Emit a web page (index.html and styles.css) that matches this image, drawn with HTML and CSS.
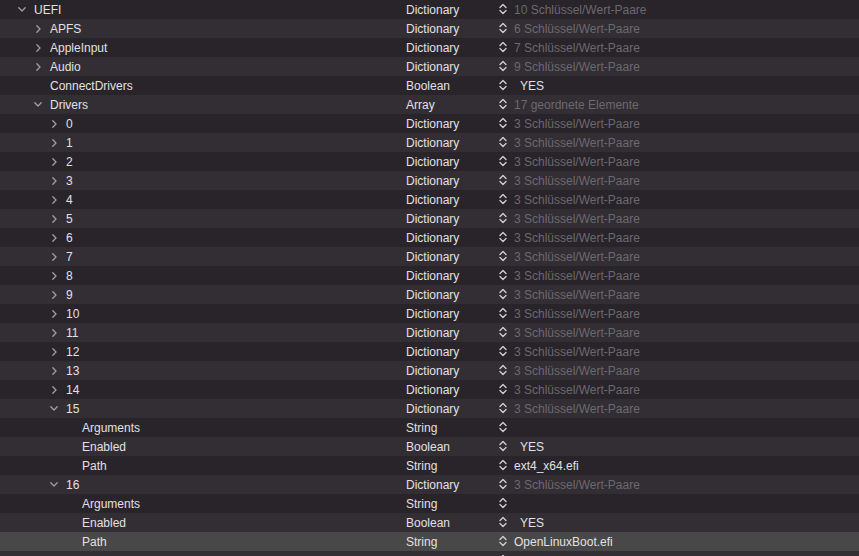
FILE: index.html
```html
<!DOCTYPE html>
<html>
<head>
<meta charset="utf-8">
<link rel="stylesheet" href="styles.css">
</head>
<body>
<div class="tree">
  <div class="row"><div class="key l0"><span class="disc"><svg width="8" height="5" viewBox="0 0 8 5"><path d="M0.8 0.8 L4 4 L7.2 0.8" class="chev"/></svg></span><span class="txt">UEFI</span></div><div class="type txt">Dictionary</div><div class="val"><svg class="ud" width="8" height="12" viewBox="0 0 8 12"><path d="M1 4.6 L4 1.6 L7 4.6 M1 7.4 L4 10.4 L7 7.4"/></svg><span class="txt muted">10 Schlüssel/Wert-Paare</span></div></div>
  <div class="row"><div class="key l1"><span class="disc"><svg width="5" height="8" viewBox="0 0 5 8"><path d="M0.8 0.8 L4 4 L0.8 7.2" class="chev"/></svg></span><span class="txt">APFS</span></div><div class="type txt">Dictionary</div><div class="val"><svg class="ud" width="8" height="12" viewBox="0 0 8 12"><path d="M1 4.6 L4 1.6 L7 4.6 M1 7.4 L4 10.4 L7 7.4"/></svg><span class="txt muted">6 Schlüssel/Wert-Paare</span></div></div>
  <div class="row"><div class="key l1"><span class="disc"><svg width="5" height="8" viewBox="0 0 5 8"><path d="M0.8 0.8 L4 4 L0.8 7.2" class="chev"/></svg></span><span class="txt">AppleInput</span></div><div class="type txt">Dictionary</div><div class="val"><svg class="ud" width="8" height="12" viewBox="0 0 8 12"><path d="M1 4.6 L4 1.6 L7 4.6 M1 7.4 L4 10.4 L7 7.4"/></svg><span class="txt muted">7 Schlüssel/Wert-Paare</span></div></div>
  <div class="row"><div class="key l1"><span class="disc"><svg width="5" height="8" viewBox="0 0 5 8"><path d="M0.8 0.8 L4 4 L0.8 7.2" class="chev"/></svg></span><span class="txt">Audio</span></div><div class="type txt">Dictionary</div><div class="val"><svg class="ud" width="8" height="12" viewBox="0 0 8 12"><path d="M1 4.6 L4 1.6 L7 4.6 M1 7.4 L4 10.4 L7 7.4"/></svg><span class="txt muted">9 Schlüssel/Wert-Paare</span></div></div>
  <div class="row"><div class="key l1"><span class="disc"></span><span class="txt">ConnectDrivers</span></div><div class="type txt">Boolean</div><div class="val"><svg class="ud" width="8" height="12" viewBox="0 0 8 12"><path d="M1 4.6 L4 1.6 L7 4.6 M1 7.4 L4 10.4 L7 7.4"/></svg><span class="txt bool">YES</span></div></div>
  <div class="row"><div class="key l1"><span class="disc"><svg width="8" height="5" viewBox="0 0 8 5"><path d="M0.8 0.8 L4 4 L7.2 0.8" class="chev"/></svg></span><span class="txt">Drivers</span></div><div class="type txt">Array</div><div class="val"><svg class="ud" width="8" height="12" viewBox="0 0 8 12"><path d="M1 4.6 L4 1.6 L7 4.6 M1 7.4 L4 10.4 L7 7.4"/></svg><span class="txt muted">17 geordnete Elemente</span></div></div>
  <div class="row"><div class="key l2"><span class="disc"><svg width="5" height="8" viewBox="0 0 5 8"><path d="M0.8 0.8 L4 4 L0.8 7.2" class="chev"/></svg></span><span class="txt">0</span></div><div class="type txt">Dictionary</div><div class="val"><svg class="ud" width="8" height="12" viewBox="0 0 8 12"><path d="M1 4.6 L4 1.6 L7 4.6 M1 7.4 L4 10.4 L7 7.4"/></svg><span class="txt muted">3 Schlüssel/Wert-Paare</span></div></div>
  <div class="row"><div class="key l2"><span class="disc"><svg width="5" height="8" viewBox="0 0 5 8"><path d="M0.8 0.8 L4 4 L0.8 7.2" class="chev"/></svg></span><span class="txt">1</span></div><div class="type txt">Dictionary</div><div class="val"><svg class="ud" width="8" height="12" viewBox="0 0 8 12"><path d="M1 4.6 L4 1.6 L7 4.6 M1 7.4 L4 10.4 L7 7.4"/></svg><span class="txt muted">3 Schlüssel/Wert-Paare</span></div></div>
  <div class="row"><div class="key l2"><span class="disc"><svg width="5" height="8" viewBox="0 0 5 8"><path d="M0.8 0.8 L4 4 L0.8 7.2" class="chev"/></svg></span><span class="txt">2</span></div><div class="type txt">Dictionary</div><div class="val"><svg class="ud" width="8" height="12" viewBox="0 0 8 12"><path d="M1 4.6 L4 1.6 L7 4.6 M1 7.4 L4 10.4 L7 7.4"/></svg><span class="txt muted">3 Schlüssel/Wert-Paare</span></div></div>
  <div class="row"><div class="key l2"><span class="disc"><svg width="5" height="8" viewBox="0 0 5 8"><path d="M0.8 0.8 L4 4 L0.8 7.2" class="chev"/></svg></span><span class="txt">3</span></div><div class="type txt">Dictionary</div><div class="val"><svg class="ud" width="8" height="12" viewBox="0 0 8 12"><path d="M1 4.6 L4 1.6 L7 4.6 M1 7.4 L4 10.4 L7 7.4"/></svg><span class="txt muted">3 Schlüssel/Wert-Paare</span></div></div>
  <div class="row"><div class="key l2"><span class="disc"><svg width="5" height="8" viewBox="0 0 5 8"><path d="M0.8 0.8 L4 4 L0.8 7.2" class="chev"/></svg></span><span class="txt">4</span></div><div class="type txt">Dictionary</div><div class="val"><svg class="ud" width="8" height="12" viewBox="0 0 8 12"><path d="M1 4.6 L4 1.6 L7 4.6 M1 7.4 L4 10.4 L7 7.4"/></svg><span class="txt muted">3 Schlüssel/Wert-Paare</span></div></div>
  <div class="row"><div class="key l2"><span class="disc"><svg width="5" height="8" viewBox="0 0 5 8"><path d="M0.8 0.8 L4 4 L0.8 7.2" class="chev"/></svg></span><span class="txt">5</span></div><div class="type txt">Dictionary</div><div class="val"><svg class="ud" width="8" height="12" viewBox="0 0 8 12"><path d="M1 4.6 L4 1.6 L7 4.6 M1 7.4 L4 10.4 L7 7.4"/></svg><span class="txt muted">3 Schlüssel/Wert-Paare</span></div></div>
  <div class="row"><div class="key l2"><span class="disc"><svg width="5" height="8" viewBox="0 0 5 8"><path d="M0.8 0.8 L4 4 L0.8 7.2" class="chev"/></svg></span><span class="txt">6</span></div><div class="type txt">Dictionary</div><div class="val"><svg class="ud" width="8" height="12" viewBox="0 0 8 12"><path d="M1 4.6 L4 1.6 L7 4.6 M1 7.4 L4 10.4 L7 7.4"/></svg><span class="txt muted">3 Schlüssel/Wert-Paare</span></div></div>
  <div class="row"><div class="key l2"><span class="disc"><svg width="5" height="8" viewBox="0 0 5 8"><path d="M0.8 0.8 L4 4 L0.8 7.2" class="chev"/></svg></span><span class="txt">7</span></div><div class="type txt">Dictionary</div><div class="val"><svg class="ud" width="8" height="12" viewBox="0 0 8 12"><path d="M1 4.6 L4 1.6 L7 4.6 M1 7.4 L4 10.4 L7 7.4"/></svg><span class="txt muted">3 Schlüssel/Wert-Paare</span></div></div>
  <div class="row"><div class="key l2"><span class="disc"><svg width="5" height="8" viewBox="0 0 5 8"><path d="M0.8 0.8 L4 4 L0.8 7.2" class="chev"/></svg></span><span class="txt">8</span></div><div class="type txt">Dictionary</div><div class="val"><svg class="ud" width="8" height="12" viewBox="0 0 8 12"><path d="M1 4.6 L4 1.6 L7 4.6 M1 7.4 L4 10.4 L7 7.4"/></svg><span class="txt muted">3 Schlüssel/Wert-Paare</span></div></div>
  <div class="row"><div class="key l2"><span class="disc"><svg width="5" height="8" viewBox="0 0 5 8"><path d="M0.8 0.8 L4 4 L0.8 7.2" class="chev"/></svg></span><span class="txt">9</span></div><div class="type txt">Dictionary</div><div class="val"><svg class="ud" width="8" height="12" viewBox="0 0 8 12"><path d="M1 4.6 L4 1.6 L7 4.6 M1 7.4 L4 10.4 L7 7.4"/></svg><span class="txt muted">3 Schlüssel/Wert-Paare</span></div></div>
  <div class="row"><div class="key l2"><span class="disc"><svg width="5" height="8" viewBox="0 0 5 8"><path d="M0.8 0.8 L4 4 L0.8 7.2" class="chev"/></svg></span><span class="txt">10</span></div><div class="type txt">Dictionary</div><div class="val"><svg class="ud" width="8" height="12" viewBox="0 0 8 12"><path d="M1 4.6 L4 1.6 L7 4.6 M1 7.4 L4 10.4 L7 7.4"/></svg><span class="txt muted">3 Schlüssel/Wert-Paare</span></div></div>
  <div class="row"><div class="key l2"><span class="disc"><svg width="5" height="8" viewBox="0 0 5 8"><path d="M0.8 0.8 L4 4 L0.8 7.2" class="chev"/></svg></span><span class="txt">11</span></div><div class="type txt">Dictionary</div><div class="val"><svg class="ud" width="8" height="12" viewBox="0 0 8 12"><path d="M1 4.6 L4 1.6 L7 4.6 M1 7.4 L4 10.4 L7 7.4"/></svg><span class="txt muted">3 Schlüssel/Wert-Paare</span></div></div>
  <div class="row"><div class="key l2"><span class="disc"><svg width="5" height="8" viewBox="0 0 5 8"><path d="M0.8 0.8 L4 4 L0.8 7.2" class="chev"/></svg></span><span class="txt">12</span></div><div class="type txt">Dictionary</div><div class="val"><svg class="ud" width="8" height="12" viewBox="0 0 8 12"><path d="M1 4.6 L4 1.6 L7 4.6 M1 7.4 L4 10.4 L7 7.4"/></svg><span class="txt muted">3 Schlüssel/Wert-Paare</span></div></div>
  <div class="row"><div class="key l2"><span class="disc"><svg width="5" height="8" viewBox="0 0 5 8"><path d="M0.8 0.8 L4 4 L0.8 7.2" class="chev"/></svg></span><span class="txt">13</span></div><div class="type txt">Dictionary</div><div class="val"><svg class="ud" width="8" height="12" viewBox="0 0 8 12"><path d="M1 4.6 L4 1.6 L7 4.6 M1 7.4 L4 10.4 L7 7.4"/></svg><span class="txt muted">3 Schlüssel/Wert-Paare</span></div></div>
  <div class="row"><div class="key l2"><span class="disc"><svg width="5" height="8" viewBox="0 0 5 8"><path d="M0.8 0.8 L4 4 L0.8 7.2" class="chev"/></svg></span><span class="txt">14</span></div><div class="type txt">Dictionary</div><div class="val"><svg class="ud" width="8" height="12" viewBox="0 0 8 12"><path d="M1 4.6 L4 1.6 L7 4.6 M1 7.4 L4 10.4 L7 7.4"/></svg><span class="txt muted">3 Schlüssel/Wert-Paare</span></div></div>
  <div class="row"><div class="key l2"><span class="disc"><svg width="8" height="5" viewBox="0 0 8 5"><path d="M0.8 0.8 L4 4 L7.2 0.8" class="chev"/></svg></span><span class="txt">15</span></div><div class="type txt">Dictionary</div><div class="val"><svg class="ud" width="8" height="12" viewBox="0 0 8 12"><path d="M1 4.6 L4 1.6 L7 4.6 M1 7.4 L4 10.4 L7 7.4"/></svg><span class="txt muted">3 Schlüssel/Wert-Paare</span></div></div>
  <div class="row"><div class="key l3"><span class="disc"></span><span class="txt">Arguments</span></div><div class="type txt">String</div><div class="val"><svg class="ud" width="8" height="12" viewBox="0 0 8 12"><path d="M1 4.6 L4 1.6 L7 4.6 M1 7.4 L4 10.4 L7 7.4"/></svg></div></div>
  <div class="row"><div class="key l3"><span class="disc"></span><span class="txt">Enabled</span></div><div class="type txt">Boolean</div><div class="val"><svg class="ud" width="8" height="12" viewBox="0 0 8 12"><path d="M1 4.6 L4 1.6 L7 4.6 M1 7.4 L4 10.4 L7 7.4"/></svg><span class="txt bool">YES</span></div></div>
  <div class="row"><div class="key l3"><span class="disc"></span><span class="txt">Path</span></div><div class="type txt">String</div><div class="val"><svg class="ud" width="8" height="12" viewBox="0 0 8 12"><path d="M1 4.6 L4 1.6 L7 4.6 M1 7.4 L4 10.4 L7 7.4"/></svg><span class="txt">ext4_x64.efi</span></div></div>
  <div class="row"><div class="key l2"><span class="disc"><svg width="8" height="5" viewBox="0 0 8 5"><path d="M0.8 0.8 L4 4 L7.2 0.8" class="chev"/></svg></span><span class="txt">16</span></div><div class="type txt">Dictionary</div><div class="val"><svg class="ud" width="8" height="12" viewBox="0 0 8 12"><path d="M1 4.6 L4 1.6 L7 4.6 M1 7.4 L4 10.4 L7 7.4"/></svg><span class="txt muted">3 Schlüssel/Wert-Paare</span></div></div>
  <div class="row"><div class="key l3"><span class="disc"></span><span class="txt">Arguments</span></div><div class="type txt">String</div><div class="val"><svg class="ud" width="8" height="12" viewBox="0 0 8 12"><path d="M1 4.6 L4 1.6 L7 4.6 M1 7.4 L4 10.4 L7 7.4"/></svg></div></div>
  <div class="row"><div class="key l3"><span class="disc"></span><span class="txt">Enabled</span></div><div class="type txt">Boolean</div><div class="val"><svg class="ud" width="8" height="12" viewBox="0 0 8 12"><path d="M1 4.6 L4 1.6 L7 4.6 M1 7.4 L4 10.4 L7 7.4"/></svg><span class="txt bool">YES</span></div></div>
  <div class="row selected"><div class="key l3"><span class="disc"></span><span class="txt">Path</span></div><div class="type txt">String</div><div class="val"><svg class="ud" width="8" height="12" viewBox="0 0 8 12"><path d="M1 4.6 L4 1.6 L7 4.6 M1 7.4 L4 10.4 L7 7.4"/></svg><span class="txt">OpenLinuxBoot.efi</span></div></div>
  <div class="row"><div class="key l1"><span class="disc"><svg width="5" height="8" viewBox="0 0 5 8"><path d="M0.8 0.8 L4 4 L0.8 7.2" class="chev"/></svg></span><span class="txt">Input</span></div><div class="type txt">Dictionary</div><div class="val"><svg class="ud" width="8" height="12" viewBox="0 0 8 12"><path d="M1 4.6 L4 1.6 L7 4.6 M1 7.4 L4 10.4 L7 7.4"/></svg><span class="txt muted">8 Schlüssel/Wert-Paare</span></div></div>
</div>
</body>
</html>
```

FILE: styles.css
```css
html, body {
  margin: 0;
  padding: 0;
  background: #28242a;
  height: 100%;
  overflow: hidden;
}

.tree {
  font-family: "Liberation Sans", Arial, sans-serif;
  font-size: 12px;
  color: #e2e0e3;
}

.row {
  display: grid;
  grid-template-columns: 406px 93px 1fr;
  height: 19px;
  align-items: stretch;
  background: #28242a;
}

.row:nth-child(even) {
  background: #322e34;
}

.row.selected {
  background: #484848;
}

.txt {
  display: block;
  box-sizing: border-box;
  height: 19px;
  padding-top: 2px;
  line-height: 17px;
  white-space: nowrap;
}

.key {
  display: flex;
  align-items: center;
}

.l0 { padding-left: 14px; }
.l1 { padding-left: 30px; }
.l2 { padding-left: 46px; }
.l3 { padding-left: 62px; }

.disc {
  width: 16px;
  height: 19px;
  margin-right: 4px;
  display: flex;
  align-items: center;
  justify-content: center;
}

.chev {
  fill: none;
  stroke: #a19ea3;
  stroke-width: 1.3;
  stroke-linecap: round;
  stroke-linejoin: round;
}

.val {
  display: flex;
  align-items: center;
}

.ud {
  flex: none;
  margin-right: 7px;
  margin-top: -1px;
}

.ud path {
  fill: none;
  stroke: #cfcdd1;
  stroke-width: 1.4;
  stroke-linecap: round;
  stroke-linejoin: round;
}

.muted {
  color: #6c686e;
}

.bool {
  padding-left: 6px;
}
```
